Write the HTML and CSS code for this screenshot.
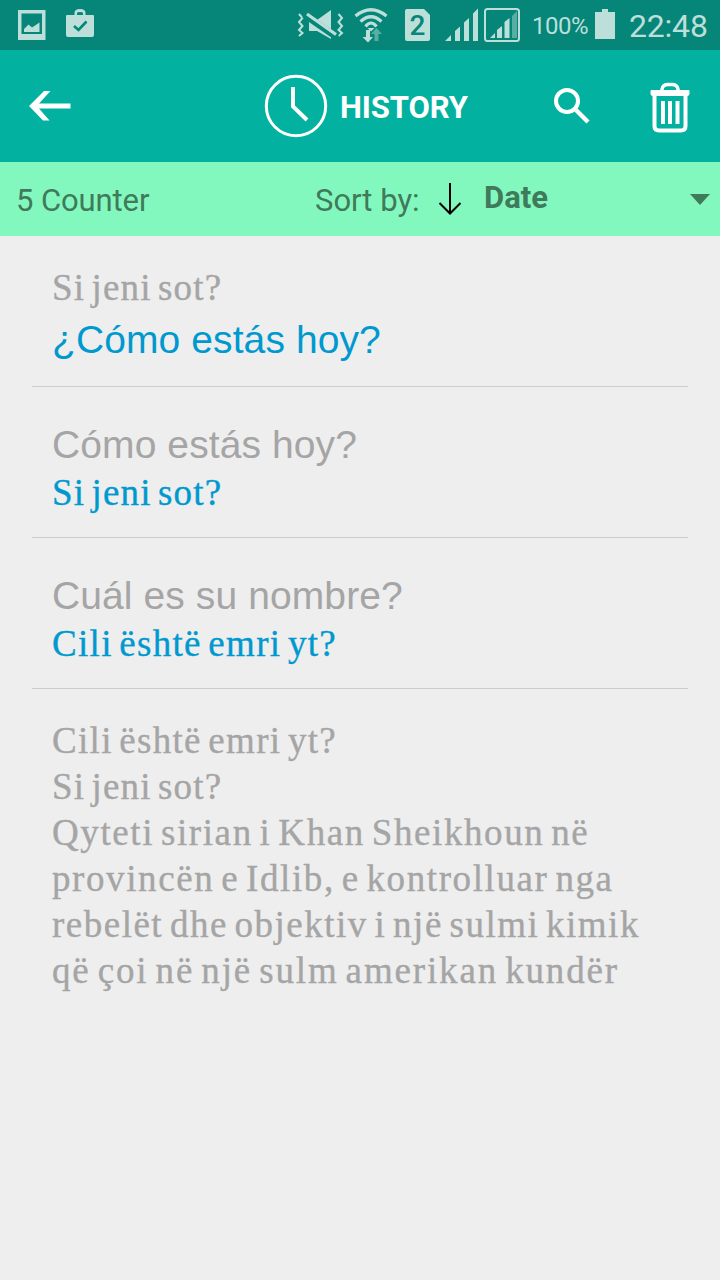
FILE: index.html
```html
<!DOCTYPE html>
<html lang="sq">
<head>
<meta charset="utf-8">
<title>History</title>
<link rel="stylesheet" href="styles.css">
</head>
<body>
<header class="status">
  <svg class="status-icons" width="110" height="50" viewBox="0 0 110 50" fill="#bddfda">
    <path fill-rule="evenodd" d="M18 10h27.500v30H18zM21.500 13.500v20.500h20.500V13.500z"/>
    <path d="M24 32v-3l4.500-4.500 3.500 3 7.500-5V32z"/>
    <path fill-rule="evenodd" d="M67 15h7.500v-2q0-4 5.500-4t5.500 4v2H93q1 0 1 1v19q0 2-2 2H68q-2 0-2-2V16q0-1 1-1zm10 0h6v-2q0-1-3-1t-3 1z"/>
    <path d="M74 26l4.500 4 8-8.500" fill="none" stroke="#058678" stroke-width="2.600"/>
  </svg>
  <svg class="status-icons" width="234" height="50" viewBox="290 0 234 50" fill="#bddfda">
    <path d="M299 14l3.500 4-3.500 4 3.500 4-3.500 4 3.500 3-3.500 3M338.500 14l3.500 4-3.500 4 3.500 4-3.500 4 3.500 3-3.500 3" fill="none" stroke="#bddfda" stroke-width="2"/>
    <path d="M309 20h8l14-10v29l-14-8h-8z"/>
    <path d="M304 14.500L337 37.500" stroke="#058678" stroke-width="6.500"/>
    <path d="M307 14l29 20.500" stroke="#bddfda" stroke-width="3.200"/>
    <g fill="none" stroke="#bddfda" stroke-width="3.200">
      <path d="M355.500 16q15.500-12.500 31 0M360.500 21.500q10.500-9.500 21 0M365.500 26.500q5.500-7 11 0"/>
    </g>
    <path d="M367.500 28h7l-3.500 3.500z"/>
    <path d="M366 30h4v7h3L368 42.500l-5.500-5.500h3.500z"/>
    <path d="M374.500 41v-7H371l5.500-6 5.500 6h-3.500v7z" fill="#58aea3"/>
    <path d="M407 9h17l6 6v24q0 2-2 2h-21q-2 0-2-2V11q0-2 2-2z"/>
    <text class="sim" x="417.500" y="35">2</text>
    <path d="M445 41l6-6v6zM455 41V31l5-4.500V41zM464 41V22.500l5-4.500v23zM473 41V13.500l5-5V41z"/>
    <rect x="485" y="9" width="34" height="32" rx="2.500" fill="none" stroke="#bddfda" stroke-width="2"/>
    <path d="M490 38l5-5v5zM497 38V30l5-4v12zM504.500 38V22l5-4v20z"/>
    <path d="M512 38V16l5-5v27z" fill="#58aea3"/>
  </svg>
  <span class="percent">100%</span>
  <svg class="battery" width="20" height="50" viewBox="0 0 20 50" fill="#bddfda"><path d="M0 12h7V9h6v3h7v27H0z"/></svg>
  <time class="clock">22:48</time>
</header>

<nav class="appbar">
  <svg class="back" width="42" height="32" viewBox="0 0 42 32" fill="#fff"><path d="M0 16L15 1h6.500L10 13.500h31.500v5H10L20.500 30.500H14z"/></svg>
  <div class="heading">
    <svg width="64" height="64" viewBox="0 0 64 64" fill="none" stroke="#fff"><circle cx="32" cy="32" r="29.700" stroke-width="3"/><path d="M29 13v19.500L43 46" stroke-width="4"/></svg>
    <h1 class="title">HISTORY</h1>
  </div>
  <svg class="search" width="36" height="36" viewBox="0 0 36 36" fill="none" stroke="#fff"><circle cx="13" cy="13" r="11" stroke-width="4"/><path d="M22 22L34 34" stroke-width="4.400"/></svg>
  <svg class="trash" width="42" height="52" viewBox="0 0 42 52" fill="none" stroke="#fff">
    <path d="M13 9V8q1-4.500 6-4.500h4q5 0 6 4.500v1" stroke-width="3.400"/>
    <path d="M2.500 9h37q1 0 1 1v2.500q0 2-2 2.500h-35q-2-.5-2-2.500V10q0-1 1-1z" fill="#fff" stroke="none"/>
    <path d="M5.500 14v31q0 4.500 4.500 4.500h22q4.500 0 4.500-4.500V14" stroke-width="4"/>
    <path d="M14 20v23M21 20v23M28.500 20v23" stroke-width="4"/>
  </svg>
</nav>

<section class="sortbar">
  <span class="counter">5 Counter</span>
  <span class="sort-label">Sort by:</span>
  <svg class="sort-arrow" width="24" height="34" viewBox="0 0 24 34" fill="none" stroke="#000" stroke-width="2"><path d="M12 1v31M1.500 21L12 31.500 22.500 21"/></svg>
  <span class="sort-value">Date</span>
  <svg class="caret" width="20" height="12" viewBox="0 0 20 12" fill="#3f7a5b"><path d="M0 0h20L10 11z"/></svg>
</section>

<main class="list">
  <article class="entry">
    <p class="serif short source">Si jeni sot?</p>
    <p class="sans result">¿Cómo estás hoy?</p>
  </article>
  <article class="entry entry-spanish">
    <p class="sans source">Cómo estás hoy?</p>
    <p class="serif short result">Si jeni sot?</p>
  </article>
  <article class="entry entry-spanish">
    <p class="sans source">Cuál es su nombre?</p>
    <p class="serif question result">Cili është emri yt?</p>
  </article>
  <article class="entry entry-last">
    <p class="serif question source">Cili është emri yt?</p>
    <p class="serif short source">Si jeni sot?</p>
    <p class="serif wide source">Qyteti sirian i Khan Sheikhoun në</p>
    <p class="serif wider source">provincën e Idlib, e kontrolluar nga</p>
    <p class="serif medium source">rebelët dhe objektiv i një sulmi kimik</p>
    <p class="serif widest source">që çoi në një sulm amerikan kundër</p>
  </article>
</main>
</body>
</html>
```
FILE: styles.css
```css
* { box-sizing: border-box; margin: 0; padding: 0; }
body { width: 720px; height: 1280px; background: #eee; font-family: Roboto, sans-serif; overflow: hidden; }
svg { display: block; flex: none; }
span, time, h1, p { white-space: nowrap; }

.status { display: flex; height: 50px; background: #058678; color: #bddfda; }
.status-icons + .status-icons { margin-left: 180px; }
.sim { fill: #058678; font: 500 28px Roboto, sans-serif; text-anchor: middle; }
.percent { width: 62px; margin-left: 8px; font-size: 24px; line-height: 52px; letter-spacing: -.5px; }
.battery { margin-left: 1px; }
.clock { margin-left: 14px; font-size: 32px; line-height: 52px; letter-spacing: -.2px; }

.appbar { display: flex; align-items: center; height: 112px; background: #02b1a0; color: #fff; }
.back { margin-left: 29px; }
.heading { display: flex; align-items: center; width: 290px; margin-left: 193px; gap: 12px; }
.title { font-size: 31px; line-height: 36px; font-weight: 700; padding-top: 4px; letter-spacing: -.1px; }
.search { margin-top: -1px; }
.trash { margin-left: 59px; margin-top: 1px; }

.sortbar { display: flex; align-items: center; height: 74px; padding-left: 16px; background: #83f8be; color: #3f7a5b; font-size: 31px; line-height: 36px; }
.counter { width: 299px; padding-top: 3px; letter-spacing: -.1px; }
.sort-label { width: 123px; padding-top: 3px; }
.sort-value { width: 206px; margin-left: 22px; font-weight: 700; margin-top: -3px; }
.caret { margin-top: 1px; }

.entry { margin: 0 32px; padding: 29px 20px 18px; border-bottom: 1px solid #ccc; }
.entry-spanish { padding: 32px 20px 21px; }
.entry-last { border-bottom: 0; }
.source { color: #a5a5a5; }
.result { color: #0099cf; }
.sans { font: 39px/57px "Liberation Sans", Arial, sans-serif; letter-spacing: .1px; }
.entry-spanish .sans { line-height: 51px; }
.serif { font: 37px/46px "Liberation Serif", "Times New Roman", serif; word-spacing: -4px; -webkit-text-stroke: .35px currentColor; }
.short { letter-spacing: 1.15px; }
.question { letter-spacing: 1.3px; }
.medium { letter-spacing: 1.5px; }
.wide { letter-spacing: 1.6px; }
.wider { letter-spacing: 1.6px; }
.widest { letter-spacing: 1.85px; }
```
